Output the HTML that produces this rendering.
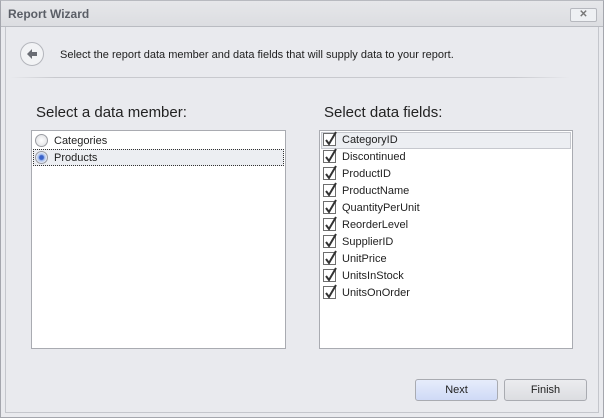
<!DOCTYPE html>
<html><head><style>
*{margin:0;padding:0;box-sizing:border-box}
body{width:604px;height:418px;background:#e9eaee;font-family:"Liberation Sans",sans-serif;font-size:11px;color:#1e1e1e;position:relative;overflow:hidden}
.win{position:absolute;left:0;top:0;width:604px;height:418px;border:1px solid #a4a6ad;border-top-color:#b8bac0}
.title{position:absolute;left:1px;top:1px;width:602px;height:26px;background:linear-gradient(#e6e7ea,#dcdde1);border-bottom:1px solid #b9bbc1}
.title span{position:absolute;left:7px;top:6px;font-weight:bold;font-size:12px;color:#5a5e66}
.x{position:absolute;left:569px;top:7px;width:27px;height:14px;border:1px solid #b6b8be;border-radius:2px;background:#eef0f3;color:#777;font-size:10px;text-align:center;line-height:12px;font-weight:bold}
.inner{position:absolute;left:5px;top:27px;width:594px;height:386px;border-left:1px solid #c4c6cc;border-right:1px solid #c4c6cc;border-bottom:1px solid #c4c6cc;background:#e9eaee}
.sep{position:absolute;left:10px;top:77px;width:560px;height:1px;background:linear-gradient(90deg,#e9eaee,#c8c9ce 8%,#c8c9ce 90%,#e9eaee)}
.back{position:absolute;left:20px;top:42px;width:24px;height:24px;border-radius:50%;border:1px solid #b4b6bc;background:#f2f3f5}
.hdr{position:absolute;left:60px;top:48px;font-size:11px}
.lbl{position:absolute;top:104px;font-size:15px;color:#222}
.list{position:absolute;top:130px;height:219px;background:#fff;border:1px solid #a9abb1}
.row{position:absolute;left:1px;height:17px;line-height:17px;width:calc(100% - 2px)}
.row span{position:absolute;left:21px;top:1px}
.cb{position:absolute;left:2px;top:2px;width:13px;height:13px;border:1px solid #6e6e6e;background:#fff}
.cb svg{position:absolute;left:0;top:-3px}
.rd{position:absolute;left:2px;top:2px;width:13px;height:13px;border-radius:50%;border:1px solid #9a9ca2;background:radial-gradient(#fff,#dcdde0)}
.btn{position:absolute;top:379px;width:83px;height:22px;border:1px solid #a9abb1;border-radius:3px;text-align:center;line-height:20px;font-size:11px}
</style></head><body>
<div class="win"></div>
<div class="title"><span>Report Wizard</span><div class="x">✕</div></div>
<div class="inner"></div>
<div class="back"><svg width="22" height="22" viewBox="0 0 22 22"><path d="M6 11 L11 6 L11 9 L16 9 L16 13 L11 13 L11 16 Z" fill="#6a6d74"/></svg></div>
<div class="hdr" style="top:49px">Select the report data member and data fields that will supply data to your report.</div>
<div class="sep"></div>
<div class="lbl" style="left:36px">Select a data member:</div>
<div class="lbl" style="left:324px">Select data fields:</div>
<div class="list" style="left:31px;width:255px">
 <div class="row" style="top:1px"><div class="rd"></div><span>Categories</span></div>
 <div class="row" style="top:18px;background:#eceef2;border:1px dotted #333"><div class="rd" style="left:1px;top:1px;background:radial-gradient(#3a62c8 25%,#a9c0ee 40%,#e9edf5 70%)"></div><span style="left:20px;top:0px">Products</span></div>
</div>
<div class="list" style="left:319px;width:254px">
<div class="row" style="top:1px;background:#eceef2;border:1px solid #c6c8ce"></div>
</div>
<div class="btn" style="left:415px;background:linear-gradient(#e6ecfb,#cfdaf6)">Next</div>
<div class="btn" style="left:504px;background:linear-gradient(#ebecef,#dcdde1)">Finish</div>
<div style="position:absolute;left:320px;top:131px;width:252px">
<div class="row" style="top:0"><div class="cb"><svg width="14" height="15"><path d="M2 9 L5 13 L12 1" stroke="#333" stroke-width="2" fill="none"/></svg></div><span>CategoryID</span></div>
<div class="row" style="top:17px"><div class="cb"><svg width="14" height="15"><path d="M2 9 L5 13 L12 1" stroke="#333" stroke-width="2" fill="none"/></svg></div><span>Discontinued</span></div>
<div class="row" style="top:34px"><div class="cb"><svg width="14" height="15"><path d="M2 9 L5 13 L12 1" stroke="#333" stroke-width="2" fill="none"/></svg></div><span>ProductID</span></div>
<div class="row" style="top:51px"><div class="cb"><svg width="14" height="15"><path d="M2 9 L5 13 L12 1" stroke="#333" stroke-width="2" fill="none"/></svg></div><span>ProductName</span></div>
<div class="row" style="top:68px"><div class="cb"><svg width="14" height="15"><path d="M2 9 L5 13 L12 1" stroke="#333" stroke-width="2" fill="none"/></svg></div><span>QuantityPerUnit</span></div>
<div class="row" style="top:85px"><div class="cb"><svg width="14" height="15"><path d="M2 9 L5 13 L12 1" stroke="#333" stroke-width="2" fill="none"/></svg></div><span>ReorderLevel</span></div>
<div class="row" style="top:102px"><div class="cb"><svg width="14" height="15"><path d="M2 9 L5 13 L12 1" stroke="#333" stroke-width="2" fill="none"/></svg></div><span>SupplierID</span></div>
<div class="row" style="top:119px"><div class="cb"><svg width="14" height="15"><path d="M2 9 L5 13 L12 1" stroke="#333" stroke-width="2" fill="none"/></svg></div><span>UnitPrice</span></div>
<div class="row" style="top:136px"><div class="cb"><svg width="14" height="15"><path d="M2 9 L5 13 L12 1" stroke="#333" stroke-width="2" fill="none"/></svg></div><span>UnitsInStock</span></div>
<div class="row" style="top:153px"><div class="cb"><svg width="14" height="15"><path d="M2 9 L5 13 L12 1" stroke="#333" stroke-width="2" fill="none"/></svg></div><span>UnitsOnOrder</span></div>
</div>
</body></html>
